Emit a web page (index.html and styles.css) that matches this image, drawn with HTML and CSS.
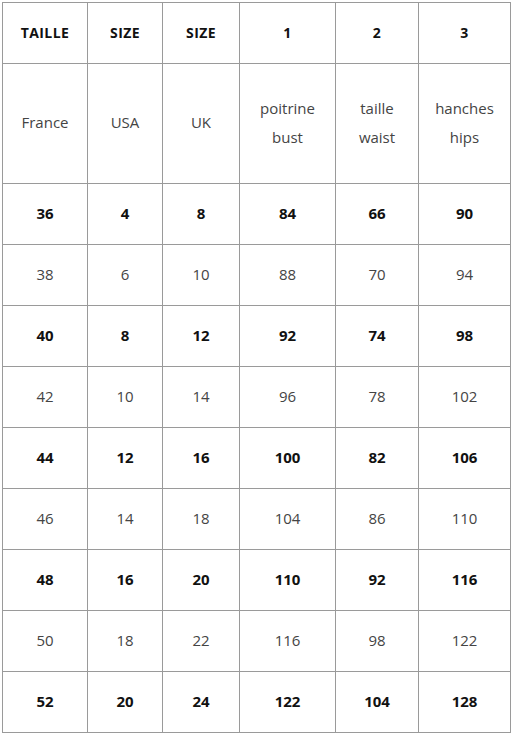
FILE: index.html
```html
<!DOCTYPE html>
<html lang="fr">
<head>
<meta charset="utf-8">
<link rel="stylesheet" href="styles.css">
</head>
<body>
<table class="sizes">
  <colgroup>
    <col class="c1"><col class="c2"><col class="c3"><col class="c4"><col class="c5"><col class="c6">
  </colgroup>
  <tr class="head"><th>TAILLE</th><th>SIZE</th><th>SIZE</th><th>1</th><th>2</th><th>3</th></tr>
  <tr class="labels"><td>France</td><td>USA</td><td>UK</td><td>poitrine<br>bust</td><td>taille<br>waist</td><td>hanches<br>hips</td></tr>
  <tr class="b"><td>36</td><td>4</td><td>8</td><td>84</td><td>66</td><td>90</td></tr>
  <tr><td>38</td><td>6</td><td>10</td><td>88</td><td>70</td><td>94</td></tr>
  <tr class="b"><td>40</td><td>8</td><td>12</td><td>92</td><td>74</td><td>98</td></tr>
  <tr><td>42</td><td>10</td><td>14</td><td>96</td><td>78</td><td>102</td></tr>
  <tr class="b"><td>44</td><td>12</td><td>16</td><td>100</td><td>82</td><td>106</td></tr>
  <tr><td>46</td><td>14</td><td>18</td><td>104</td><td>86</td><td>110</td></tr>
  <tr class="b"><td>48</td><td>16</td><td>20</td><td>110</td><td>92</td><td>116</td></tr>
  <tr><td>50</td><td>18</td><td>22</td><td>116</td><td>98</td><td>122</td></tr>
  <tr class="b"><td>52</td><td>20</td><td>24</td><td>122</td><td>104</td><td>128</td></tr>
</table>
</body>
</html>
```

FILE: styles.css
```css
html, body {
  margin: 0;
  padding: 0;
  background: #fff;
}
body {
  padding: 2px;
  font-family: "Open Sans", "Noto Sans", sans-serif;
  font-size: 15px;
  color: #444;
}
.sizes {
  border-collapse: collapse;
  table-layout: fixed;
  width: 508px;
}
.c1 { width: 85px; }
.c2 { width: 75px; }
.c3 { width: 77px; }
.c4 { width: 96px; }
.c5 { width: 83px; }
.c6 { width: 92px; }
.sizes th, .sizes td {
  border: 1px solid #9a9a9a;
  text-align: center;
  vertical-align: middle;
  padding: 0 0 2px;
  height: 58px;
  line-height: 29px;
}
.sizes th {
  font-weight: 700;
  color: #111;
  font-size: 14px;
  letter-spacing: 0.4px;
}
.labels td {
  height: 117px;
}
.b td {
  font-weight: 700;
  color: #111;
}
```
